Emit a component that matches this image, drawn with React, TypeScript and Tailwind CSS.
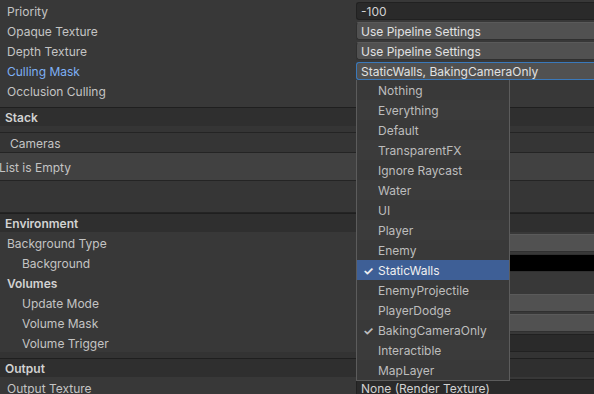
import React from 'react';

type RowProps = {
  label: string;
  indent?: boolean;
  bold?: boolean;
  active?: boolean;
  children?: React.ReactNode;
};

function Row({ label, indent, bold, active, children }: RowProps) {
  return (
    <div className="flex h-[20px] items-center">
      <div
        className={`w-[356px] shrink-0 pt-[3px] ${indent ? 'pl-[22px]' : 'pl-[7px]'} ${
          bold ? 'font-semibold text-[#d2d2d2]' : active ? 'text-[#7eb0f5]' : 'text-[#c4c4c4]'
        }`}
      >
        {label}
      </div>
      <div className="flex h-full flex-1 items-center pt-[1px]">{children}</div>
    </div>
  );
}

function DarkField({ text }: { text?: string }) {
  return (
    <div className="flex h-[18px] w-full items-center rounded-l-[3px] border border-r-0 border-[#212121] bg-[#2a2a2a] pl-[4px] pt-[2px] text-[#d2d2d2]">
      {text}
    </div>
  );
}

function Dropdown({ text, focused }: { text?: string; focused?: boolean }) {
  return (
    <div
      className={`flex h-[18px] w-full items-center rounded-l-[3px] border border-r-0 bg-[#515151] pl-[4px] pt-[2px] text-[#e2e2e2] ${
        focused ? 'border-[#3a79bb]' : 'border-[#303030] border-t-[#5a5a5a]'
      }`}
    >
      {text}
    </div>
  );
}

function Header({ title }: { title: string }) {
  return (
    <div className="flex h-[19px] items-center border-t border-[#1f1f1f] bg-[#2f2f2f] pl-[5px] pt-[2px] font-semibold text-[#d2d2d2]">
      {title}
    </div>
  );
}

const layers: { name: string; checked?: boolean; selected?: boolean }[] = [
  { name: 'Nothing' },
  { name: 'Everything' },
  { name: 'Default' },
  { name: 'TransparentFX' },
  { name: 'Ignore Raycast' },
  { name: 'Water' },
  { name: 'UI' },
  { name: 'Player' },
  { name: 'Enemy' },
  { name: 'StaticWalls', checked: true, selected: true },
  { name: 'EnemyProjectile' },
  { name: 'PlayerDodge' },
  { name: 'BakingCameraOnly', checked: true },
  { name: 'Interactible' },
  { name: 'MapLayer' },
];

export default function App() {
  return (
    <div
      className="relative h-[394px] w-[594px] overflow-hidden bg-[#383838] text-[12px] leading-none"
      style={{ fontFamily: 'Inter, "Noto Sans", sans-serif' }}
    >
      {/* Camera rendering */}
      <Row label="Priority">
        <DarkField text="-100" />
      </Row>
      <Row label="Opaque Texture">
        <Dropdown text="Use Pipeline Settings" />
      </Row>
      <Row label="Depth Texture">
        <Dropdown text="Use Pipeline Settings" />
      </Row>
      <Row label="Culling Mask" active>
        <Dropdown text="StaticWalls, BakingCameraOnly" focused />
      </Row>
      <Row label="Occlusion Culling" />
      <div className="h-[7px]" />

      {/* Stack */}
      <Header title="Stack" />
      <div className="h-[6px] bg-[#353535]" />
      <div className="flex h-[20px] items-center border-t border-[#242424] bg-[#353535] pl-[10px] pt-[2px] text-[#c4c4c4]">
        Cameras
      </div>
      <div className="flex h-[29px] items-center border-y border-[#242424] bg-[#414141] pt-[2px] text-[#c4c4c4]">
        <span className="-ml-[1px]">List is Empty</span>
      </div>
      <div className="h-[32px] border-b border-[#242424] bg-[#363636]" />

      {/* Environment */}
      <Header title="Environment" />
      <Row label="Background Type">
        <Dropdown />
      </Row>
      <Row label="Background" indent>
        <div className="h-[18px] w-full border border-r-0 border-[#303030] bg-black" />
      </Row>
      <Row label="Volumes" bold />
      <Row label="Update Mode" indent>
        <Dropdown />
      </Row>
      <Row label="Volume Mask" indent>
        <Dropdown />
      </Row>
      <Row label="Volume Trigger" indent>
        <DarkField />
      </Row>
      <div className="h-[6px] bg-[#333333]" />

      {/* Output */}
      <Header title="Output" />
      <Row label="Output Texture">
        <DarkField text="None (Render Texture)" />
      </Row>

      {/* Layer mask popup */}
      <div className="absolute left-[356px] top-[80px] w-[154px] border border-t-0 border-[#5c5c5c] bg-[#393939]">
        {layers.map((l, i) => (
          <div
            key={l.name}
            className={`flex h-[20px] items-center pt-[2px] ${
              l.selected ? 'bg-[#3e5f96] text-[#f0f0f0]' : i % 2 ? 'bg-[#3b3b3b] text-[#bdbdbd]' : 'text-[#bdbdbd]'
            }`}
          >
            <span className="w-[21px] shrink-0 pl-[6px] font-bold">{l.checked ? '✓' : ''}</span>
            <span>{l.name}</span>
          </div>
        ))}
      </div>
    </div>
  );
}
